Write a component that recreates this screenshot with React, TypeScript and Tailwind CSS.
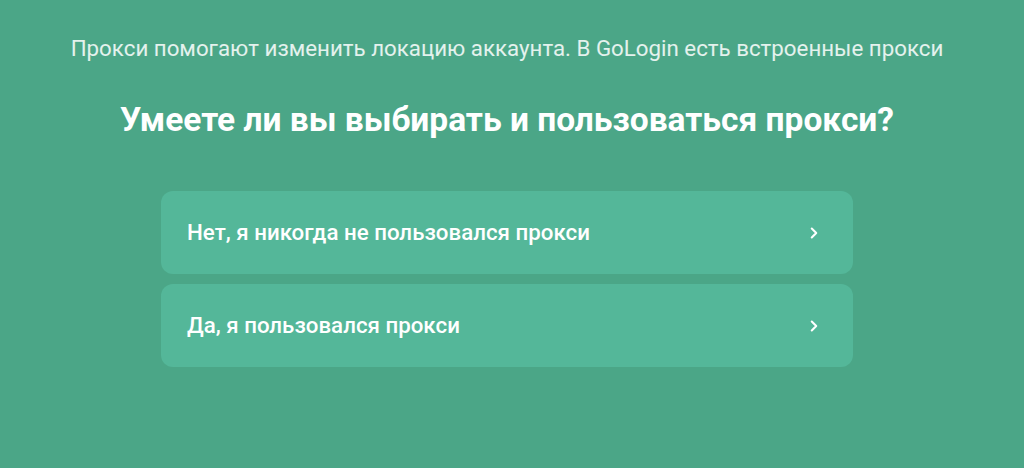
import { ChevronRight } from 'lucide-react'

const options = [
  'Нет, я никогда не пользовался прокси',
  'Да, я пользовался прокси',
]

export default function App() {
  return (
    <div className="min-h-[468px] w-full bg-[#4ba687] font-['Roboto',sans-serif] text-white flex flex-col items-center pt-[34px] pr-[10px]">
      <p className="text-[22.3px] leading-[28px] text-white/85">
        Прокси помогают изменить локацию аккаунта. В GoLogin есть встроенные прокси
      </p>
      <h1 className="mt-[40px] text-[33.5px] leading-[36px] font-bold">
        Умеете ли вы выбирать и пользоваться прокси?
      </h1>
      <div className="mt-[53px] w-[692px] flex flex-col gap-[10px]">
        {options.map((label) => (
          <button
            key={label}
            className="h-[83px] w-full rounded-xl bg-[#54b799] flex items-center justify-between pl-[26px] pr-[30px] text-left"
          >
            <span className="text-[22.3px] font-medium">{label}</span>
            <ChevronRight size={18} strokeWidth={2.75} />
          </button>
        ))}
      </div>
    </div>
  )
}
